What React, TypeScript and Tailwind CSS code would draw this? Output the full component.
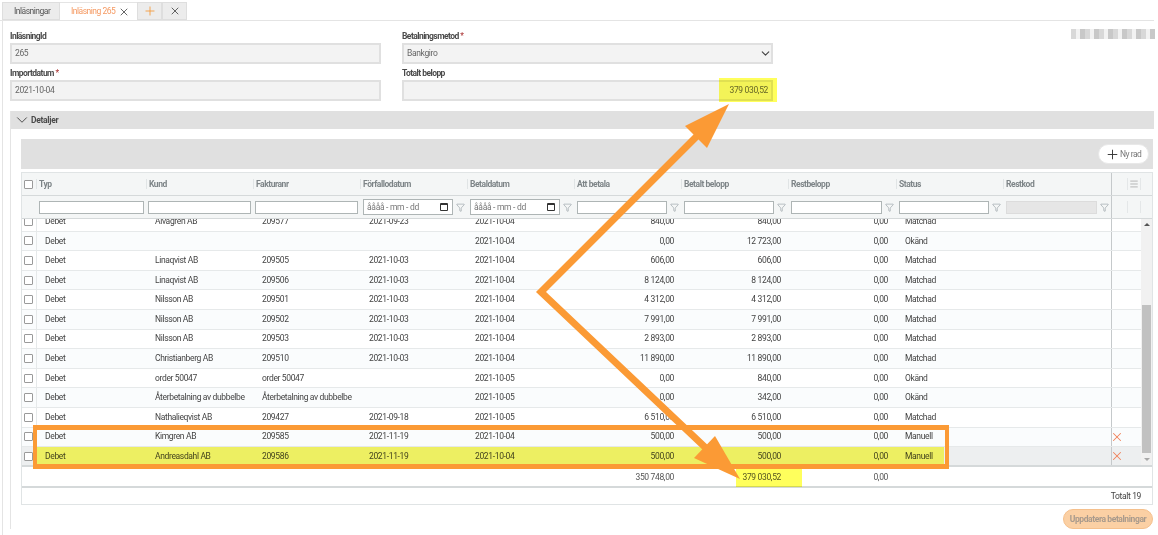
import React from 'react';
import { ChevronDown, Filter, Menu, Plus, X } from 'lucide-react';

const GRID = 'grid grid-cols-[14px_110px_107px_107px_107px_107px_107px_107px_108px_107px_108px_16px_14px]';

interface Row {
  kund: string;
  faktura: string;
  forfall: string;
  betal: string;
  att: string;
  betalt: string;
  status: string;
  remove?: boolean;
  tone?: string;
}

const rows: Row[] = [
  { kund: 'Alvagren AB', faktura: '209577', forfall: '2021-09-23', betal: '2021-10-04', att: '840,00', betalt: '840,00', status: 'Matchad' },
  { kund: '', faktura: '', forfall: '', betal: '2021-10-04', att: '0,00', betalt: '12 723,00', status: 'Okänd', tone: 'bg-[#fafcfd]' },
  { kund: 'Linaqvist AB', faktura: '209505', forfall: '2021-10-03', betal: '2021-10-04', att: '606,00', betalt: '606,00', status: 'Matchad' },
  { kund: 'Linaqvist AB', faktura: '209506', forfall: '2021-10-03', betal: '2021-10-04', att: '8 124,00', betalt: '8 124,00', status: 'Matchad', tone: 'bg-[#fafcfd]' },
  { kund: 'Nilsson AB', faktura: '209501', forfall: '2021-10-03', betal: '2021-10-04', att: '4 312,00', betalt: '4 312,00', status: 'Matchad' },
  { kund: 'Nilsson AB', faktura: '209502', forfall: '2021-10-03', betal: '2021-10-04', att: '7 991,00', betalt: '7 991,00', status: 'Matchad', tone: 'bg-[#fafcfd]' },
  { kund: 'Nilsson AB', faktura: '209503', forfall: '2021-10-03', betal: '2021-10-04', att: '2 893,00', betalt: '2 893,00', status: 'Matchad' },
  { kund: 'Christianberg AB', faktura: '209510', forfall: '2021-10-03', betal: '2021-10-04', att: '11 890,00', betalt: '11 890,00', status: 'Matchad', tone: 'bg-[#fafcfd]' },
  { kund: 'order 50047', faktura: 'order 50047', forfall: '', betal: '2021-10-05', att: '0,00', betalt: '840,00', status: 'Okänd' },
  { kund: 'Återbetalning av dubbelbe', faktura: 'Återbetalning av dubbelbe', forfall: '', betal: '2021-10-05', att: '0,00', betalt: '342,00', status: 'Okänd', tone: 'bg-[#fafcfd]' },
  { kund: 'Nathalieqvist AB', faktura: '209427', forfall: '2021-09-18', betal: '2021-10-05', att: '6 510,00', betalt: '6 510,00', status: 'Matchad' },
  { kund: 'Kimgren AB', faktura: '209585', forfall: '2021-11-19', betal: '2021-10-04', att: '500,00', betalt: '500,00', status: 'Manuell', remove: true, tone: 'bg-[#fafcfd]' },
  { kund: 'Andreasdahl AB', faktura: '209586', forfall: '2021-11-19', betal: '2021-10-04', att: '500,00', betalt: '500,00', status: 'Manuell', remove: true, tone: 'bg-[#edeff0]' },
];

const headers = ['Typ', 'Kund', 'Fakturanr', 'Förfallodatum', 'Betaldatum', 'Att betala', 'Betalt belopp', 'Restbelopp', 'Status', 'Restkod'];

const Box = () => <span className="block w-[9px] h-[9px] border border-[#9a9a9a] rounded-[1px] bg-white" />;

const Field = ({ label, required, children }: { label: string; required?: boolean; children: React.ReactNode }) => (
  <div className="w-[371px]">
    <div className="h-[16px] text-[8.5px] leading-[19px] font-bold tracking-[-0.55px] text-[#4a4a4a]">
      {label}
      {required && <span className="text-[#a33] font-normal"> *</span>}
    </div>
    <div className="relative flex items-center h-[21px] px-[3px] border-2 border-[#e0e0e0] bg-[#f3f3f3] text-[8.5px] tracking-[-0.35px] text-[#666]">
      {children}
    </div>
  </div>
);

const FilterIcon = () => <Filter size={9} strokeWidth={1.5} className="text-[#8a9499] shrink-0" />;

const TextFilter = ({ off, icon = true, first }: { off?: boolean; icon?: boolean; first?: boolean }) => (
  <div className={`flex items-center gap-[3px] pr-[2px] ${first ? 'pl-[3px]' : 'pl-[2px]'}`}>
    <span className={`block grow h-[13px] border ${off ? 'bg-[#e6e6e6] border-[#dcdcdc]' : 'bg-white border-[#aeb5b5]'}`} />
    {icon && <FilterIcon />}
  </div>
);

const DateFilter = () => (
  <div className="flex items-center gap-[3px] pl-[3px] pr-[2px]">
    <span className="flex items-center justify-between grow h-[16px] pl-[3px] pr-[4px] border border-[#aeb5b5] bg-white text-[8.5px] tracking-[-0.3px] text-[#777]">
      åååå - mm - dd
      <span className="block w-[8px] h-[8px] border border-[#333] border-t-2 rounded-[1px]" />
    </span>
    <FilterIcon />
  </div>
);

export default function App() {
  return (
    <div className="relative w-[1158px] h-[535px] overflow-hidden bg-white font-['Roboto',sans-serif] text-[#444]">
      {/* flikar */}
      <div className="flex items-end h-[21px] pl-[2px] pt-[3px] border-b border-[#e4e4e4] w-[1154px] text-[8.5px] tracking-[-0.5px]">
        <div className="flex items-center h-[18px] w-[58px] pl-[11px] bg-[#ececec] border border-[#dedede] text-[#555]">Inläsningar</div>
        <div className="flex items-center h-[18px] w-[77px] pl-[11px] gap-[3px] bg-white border-t border-[#e4e4e4] text-[#f59a63]">
          Inläsning 265 <X size={12} strokeWidth={1.5} className="text-[#333]" />
        </div>
        <div className="flex items-center justify-center h-[18px] w-[25px] bg-[#ececec] border border-[#dedede]">
          <Plus size={14} strokeWidth={1.5} className="text-[#f59a3c]" />
        </div>
        <div className="flex items-center justify-center h-[18px] w-[25px] bg-[#ececec] border border-[#dedede]">
          <X size={12} strokeWidth={1.5} className="text-[#333]" />
        </div>
      </div>

      <div className="ml-[2px] w-[1152px] h-[514px] border-l border-[#e4e4e4] pl-[7px]">
        {/* formulär */}
        <div className="relative flex gap-[21px] pt-[6px]">
          <div className="flex flex-col">
            <Field label="InläsningId">265</Field>
            <Field label="Importdatum" required>2021-10-04</Field>
          </div>
          <div className="flex flex-col">
            <Field label="Betalningsmetod" required>
              Bankgiro
              <ChevronDown size={13} strokeWidth={2} className="absolute right-[-1px] text-[#444]" />
            </Field>
            <Field label="Totalt belopp">
              <span className="relative ml-auto">379 030,52</span>
            </Field>
          </div>
          <div className="absolute right-[-1px] top-[8px] w-[84px] h-[10px] bg-[repeating-linear-gradient(90deg,#d8d8d8_0_5px,#f2f2f2_5px_9px,#c8c8c8_9px_14px)]" />
        </div>

        {/* detaljer */}
        <div className="mt-[10px] border-l border-[#e4e4e4]">
          <div className="flex items-center h-[18px] pl-[2px] bg-[#e0e0e0] text-[8.5px] font-bold tracking-[-0.3px] text-[#4a4a4a]">
            <ChevronDown size={18} strokeWidth={1.25} className="text-[#444]" /> Detaljer
          </div>
          <div className="pl-[10px] pt-[10px]">
            <div className="flex items-center justify-end h-[30px] w-[1132px] pr-[4px] bg-[#e0e0e0]">
              <div className="flex items-center gap-[0px] h-[20px] w-[51px] pl-[6px] bg-white rounded-full border border-[#e8e8e8] text-[8.5px] tracking-[-0.5px] text-[#777]">
                <Plus size={15} strokeWidth={1.5} className="text-[#333]" /> Ny rad
              </div>
            </div>

            <div className="relative mt-[3px] w-[1132px] border-x border-[#e0e4e5]">
              {/* rubrik */}
              <div className="bg-[#f4f6f6] border-t border-[#e0e4e5]">
                <div className={`${GRID} h-[22px] items-center text-[8.5px] font-bold tracking-[-0.45px] text-[#7d8487]`}>
                  <div className="pl-[2px]"><Box /></div>
                  {headers.map(h => (
                    <div key={h} className="pl-[2px] border-l border-[#e0e4e5] leading-[10px]">{h}</div>
                  ))}
                  <div className="h-full border-l border-[#c5c9cb]" />
                  <div className="flex items-center justify-center h-[12px] border-x border-[#e4e7e8]">
                    <Menu size={10} strokeWidth={2} className="text-[#aaa]" />
                  </div>
                </div>
                <div className={`${GRID} h-[23px] items-center border-t border-[#d5d9da]`}>
                  <div />
                  <TextFilter first icon={false} />
                  <TextFilter icon={false} />
                  <TextFilter icon={false} />
                  <DateFilter />
                  <DateFilter />
                  <TextFilter first />
                  <TextFilter first />
                  <TextFilter first />
                  <TextFilter first />
                  <TextFilter first off />
                  <div className="h-full border-l border-[#c5c9cb]" />
                  <div className="h-[12px] border-x border-[#e4e7e8]" />
                </div>
                <div className="border-t border-[#d5d9da]" />
              </div>

              {/* rader */}
              <div className="relative h-[248px] overflow-hidden border-b-2 border-[#d5d9da]">
                <div className="-mt-[7px]">
                  {rows.map((r, i) => (
                    <div key={i} className={`${GRID} h-[19.6px] items-center border-b border-[#e6e9ea] text-[8.5px] tracking-[-0.35px] text-[#444] ${r.tone ?? 'bg-white'}`}>
                      <div className="pl-[2px]"><Box /></div>
                      <div className="h-full flex items-center pl-[8px] border-l border-[#e6e9ea]">Debet</div>
                      <div className="pl-[9px] whitespace-nowrap overflow-hidden">{r.kund}</div>
                      <div className="pl-[9px] whitespace-nowrap overflow-hidden">{r.faktura}</div>
                      <div className="pl-[9px]">{r.forfall}</div>
                      <div className="pl-[8px]">{r.betal}</div>
                      <div className="text-right pr-[7px]">{r.att}</div>
                      <div className="text-right pr-[7px]">{r.betalt}</div>
                      <div className="text-right pr-[8px]">0,00</div>
                      <div className="pl-[9px]">{r.status}</div>
                      <div />
                      <div className="h-full flex items-center border-l border-[#c5c9cb]">
                        {r.remove && <X size={14} strokeWidth={1.75} className="text-[#f0825a] -ml-[2px]" />}
                      </div>
                      <div />
                    </div>
                  ))}
                </div>
                {/* scrollbar */}
                <div className="absolute right-0 top-0 bottom-0 w-[11px] bg-[#f1f1f1] flex flex-col items-center justify-between py-[4px]">
                  <span className="block w-0 h-0 border-x-[3px] border-x-transparent border-b-[3px] border-b-[#555]" />
                  <span className="absolute left-[1px] right-[1px] top-[86px] h-[148px] bg-[#c1c1c1]" />
                  <span className="block w-0 h-0 border-x-[3px] border-x-transparent border-t-[3px] border-t-[#a8a8a8]" />
                </div>
              </div>

              {/* summa */}
              <div className={`${GRID} h-[21px] pt-[1px] items-center border-b-2 border-[#d5d9da] text-[8.5px] tracking-[-0.35px] text-[#555]`}>
                <div /><div /><div /><div /><div /><div />
                <div className="text-right pr-[7px]">350 748,00</div>
                <div className="text-right pr-[7px]">379 030,52</div>
                <div className="text-right pr-[8px]">0,00</div>
              </div>
              <div className="flex items-center justify-end h-[17px] pr-[11px] border-b border-[#e0e4e5] text-[8.5px] tracking-[-0.35px] text-[#444]">Totalt 19</div>
            </div>

            <div className="flex justify-end w-[1132px] pt-[4px]">
              <div className="flex items-center justify-center w-[90px] h-[20px] rounded-full bg-[#fbd0a4] border border-[#f5c08c] text-[8.5px] font-bold tracking-[-0.4px] text-[#a89a8c]">
                Uppdatera betalningar
              </div>
            </div>
          </div>
        </div>
      </div>

      {/* markeringar ovanpå bilden */}
      <div className="absolute left-[719px] top-[78px] w-[58px] h-[24px] bg-[#ffff5c] mix-blend-multiply" />
      <div className="absolute left-[736px] top-[468px] w-[66px] h-[19px] bg-[#ffff5c] mix-blend-multiply" />
      <div className="absolute left-[37px] top-[447px] w-[907px] h-[17px] bg-[#ffff68] mix-blend-multiply" />
      <div className="absolute left-[33px] top-[425px] w-[916px] h-[44px] border-x-[4px] border-y-[5px] border-[#fb9a35]" />
      <svg className="absolute inset-0" width="1158" height="535" viewBox="0 0 1158 535" fill="none">
        <path d="M697 136 L541 292 L708 450" stroke="#fb9a35" strokeWidth="7" />
        <polygon points="729,104 685,126 707,148" fill="#fb9a35" />
        <polygon points="740,479 715,436 694,458" fill="#fb9a35" />
      </svg>
    </div>
  );
}
